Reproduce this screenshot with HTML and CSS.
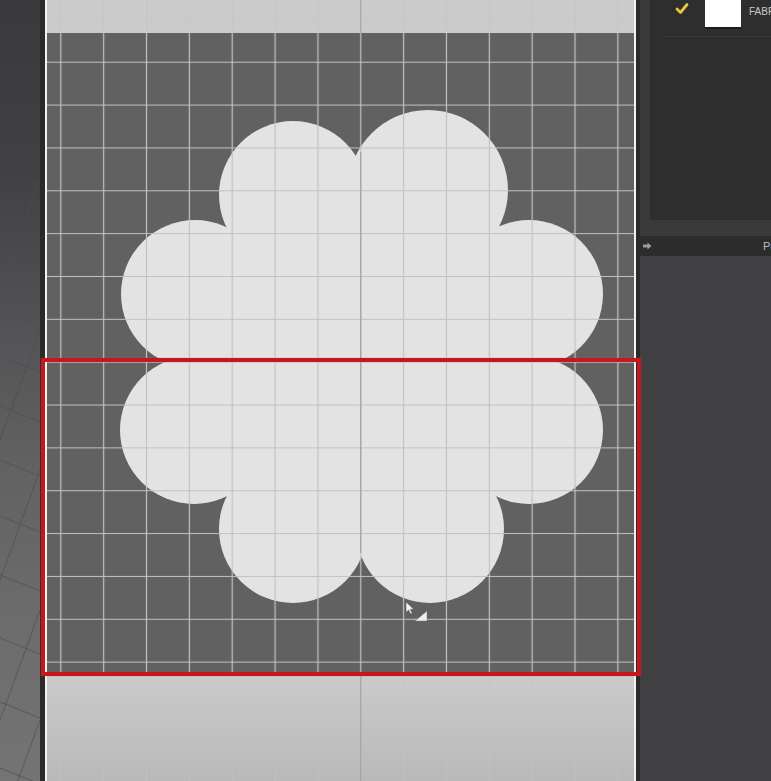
FILE: index.html
```html
<!DOCTYPE html>
<html lang="en">
<head>
<meta charset="utf-8">
<title>Pattern window</title>
<link rel="stylesheet" href="styles.css">
</head>
<body>
<div class="app">
  <div class="viewport">
    <svg width="40" height="781" viewBox="0 0 40 781">
      <g stroke="#4e4e50" stroke-width="1" stroke-opacity="0.7" fill="none">
        <path d="M0 230L40 246M0 268L40 284M0 310L40 326M0 356L40 372M0 406L40 422M0 460L40 476M0 516L40 532M0 575L40 591M0 638L40 654M0 702L40 718M0 768L40 784"/>
        <path d="M40 180L0 290M40 330L0 440M40 470L0 580M40 610L0 720M40 720L0 830"/>
      </g>
    </svg>
  </div>
  <div class="split"></div>
  <div class="pattern-window">
    <svg class="strip" width="587" height="33" viewBox="47 0 587 33">
      <defs>
        <pattern id="gl" patternUnits="userSpaceOnUse" x="39.4" y="40.8" width="42.85" height="42.85">
          <path d="M21.425 0V42.85M0 21.425H42.85" stroke="#c3c3c3" stroke-width="1.2" fill="none"/>
        </pattern>
        <pattern id="gd" patternUnits="userSpaceOnUse" x="39.4" y="40.8" width="42.85" height="42.85">
          <path d="M21.425 0V42.85M0 21.425H42.85" stroke="#c2c2c2" stroke-width="1.2" fill="none"/>
        </pattern>
        <linearGradient id="bot" gradientUnits="userSpaceOnUse" x1="0" y1="674" x2="0" y2="781">
          <stop offset="0" stop-color="#cbcbcb"/>
          <stop offset="1" stop-color="#b9b9b9"/>
        </linearGradient>
      </defs>
      <rect x="47" y="0" width="587" height="33" fill="#cbcbcb"/>
      <rect x="47" y="0" width="587" height="33" fill="url(#gl)" opacity="0.6"/>
      <line x1="360.7" y1="0" x2="360.7" y2="33" stroke="#a9a9a9" stroke-width="1.3"/>
    </svg>
    <svg class="grid-area" width="587" height="641" viewBox="47 33 587 641">
      <rect x="47" y="33" width="587" height="641" fill="#616161"/>
      <g fill="#e3e3e3">
        <circle cx="293" cy="195" r="74"/>
        <circle cx="428" cy="190" r="80"/>
        <circle cx="195" cy="294" r="74"/>
        <circle cx="529" cy="294" r="74"/>
        <circle cx="194" cy="430" r="74"/>
        <circle cx="529" cy="430" r="74"/>
        <circle cx="293" cy="529" r="74"/>
        <circle cx="430" cy="529" r="74"/>
        <polygon points="293,195 428,190 529,294 529,430 430,529 293,529 194,430 195,294"/>
      </g>
      <rect x="47" y="33" width="587" height="641" fill="url(#gd)"/>
      <line x1="360.7" y1="152" x2="360.7" y2="553" stroke="#a4a4a4" stroke-width="1.3"/>
    </svg>
    <svg class="strip" width="587" height="107" viewBox="47 674 587 107">
      <rect x="47" y="674" width="587" height="107" fill="url(#bot)"/>
      <rect x="47" y="674" width="587" height="107" fill="url(#gl)" opacity="0.5"/>
      <line x1="360.7" y1="674" x2="360.7" y2="781" stroke="#a6a6a6" stroke-width="1.3"/>
    </svg>
  </div>
  <div class="split narrow"></div>
  <aside class="panel">
    <div class="list-box">
      <div class="list-row">
        <svg class="check" width="14" height="15" viewBox="0 0 14 15">
          <path d="M2 8L5.5 11.5L12 3.5" stroke="#e8c440" stroke-width="2.8" fill="none" stroke-linecap="round" stroke-linejoin="round"/>
        </svg>
        <div class="swatch"></div>
        <span class="label">FABRIC</span>
      </div>
    </div>
    <div class="bar">
      <svg class="bar-arrow" width="9" height="8" viewBox="0 0 9 8">
        <path d="M0 2.5H4.5V0.5L8.5 4L4.5 7.5V5.5H0Z" fill="#9a9a9a"/>
      </svg>
      <span class="bar-title">Property Editor</span>
    </div>
    <div class="panel-rest"></div>
  </aside>
</div>
<div class="selection"></div>
<svg class="cursor" width="26" height="24" viewBox="0 0 26 24">
  <polygon points="2,2 2,12.5 4.6,10 6.6,14 8.2,13.2 6.3,9.3 9.8,9.3" fill="#f4f4f4" stroke="#555" stroke-width="0.5"/>
  <polygon points="11,21 23,11 23,21" fill="#f0f0f0" stroke="#777" stroke-width="0.5"/>
</svg>
</body>
</html>
```

FILE: styles.css
```css
html, body {
  margin: 0;
  padding: 0;
}

body {
  width: 771px;
  height: 781px;
  overflow: hidden;
  position: relative;
  background: #2c2c2c;
  font-family: "Liberation Sans", Arial, sans-serif;
}

.app {
  display: flex;
  height: 781px;
}

.viewport {
  width: 40px;
  flex: none;
  background: linear-gradient(#3a3a3c 0%, #414143 22%, #535355 42%, #626263 60%, #6c6c6c 80%, #747474 100%);
}

.viewport svg,
.pattern-window svg {
  display: block;
}

.split {
  width: 5px;
  flex: none;
  background: #2b2b2c;
}

.split.narrow {
  width: 4px;
}

.pattern-window {
  width: 587px;
  flex: none;
  border-left: 2px solid #f2f2f2;
  border-right: 2px solid #f2f2f2;
  display: flex;
  flex-direction: column;
}

.panel {
  flex: 1;
  min-width: 0;
  display: flex;
  flex-direction: column;
  background: #3a3a3c;
  overflow: hidden;
}

.list-box {
  margin-left: 10px;
  height: 220px;
  background: #2e2e2e;
  flex: none;
}

.list-row {
  display: flex;
  align-items: flex-start;
  height: 36px;
  margin-left: 13px;
  border-bottom: 1px solid #383838;
  white-space: nowrap;
}

.check {
  display: block;
  margin-left: 12px;
  margin-top: 1px;
  flex: none;
}

.swatch {
  width: 36px;
  height: 27px;
  margin-left: 16px;
  background: #ffffff;
  box-shadow: 0 2px 0 #1c1c1c;
  flex: none;
}

.label {
  margin-left: 8px;
  line-height: 24px;
  font-size: 10px;
  color: #c9c9c9;
}

.bar {
  margin-top: 16px;
  height: 20px;
  flex: none;
  display: flex;
  align-items: center;
  background: #2c2c2c;
  white-space: nowrap;
}

.bar-arrow {
  display: block;
  margin-left: 3px;
  flex: none;
}

.bar-title {
  margin-left: 111px;
  font-size: 11px;
  color: #bdbdbd;
}

.panel-rest {
  flex: 1;
  background: #404042;
}

.selection {
  position: absolute;
  left: 41px;
  top: 358px;
  width: 600px;
  height: 318px;
  box-sizing: border-box;
  border: 4px solid #c4181e;
  box-shadow: 0 0 1px rgba(220, 60, 60, 0.6);
}

.cursor {
  position: absolute;
  left: 404px;
  top: 600px;
  display: block;
}
```
